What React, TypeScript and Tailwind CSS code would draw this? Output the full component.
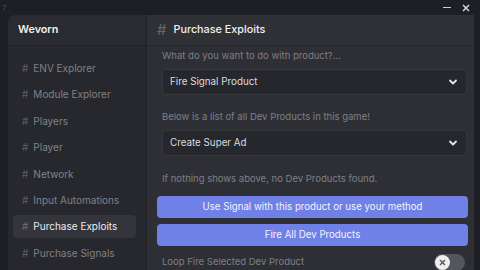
import React, { useState } from "react";

const items = [
  "ENV Explorer",
  "Module Explorer",
  "Players",
  "Player",
  "Network",
  "Input Automations",
  "Purchase Exploits",
  "Purchase Signals",
];

const Chevron = () => (
  <svg width="10" height="10" viewBox="0 0 10 10" fill="none">
    <path d="M2 3.5 L5 6.5 L8 3.5" stroke="#e5e5e5" strokeWidth="1.8" strokeLinecap="round" strokeLinejoin="round" />
  </svg>
);

const Select = ({ value }: { value: string }) => (
  <div className="h-[26px] rounded-[4px] bg-[#26272c] border border-[#36373d] flex items-center justify-between pl-[7px] pr-[8px] text-[9.8px] text-[#dcdcdf]">
    <span>{value}</span>
    <Chevron />
  </div>
);

export default function App() {
  const [active] = useState("Purchase Exploits");
  const [loop, setLoop] = useState(false);

  return (
    <div
      className="w-[480px] h-[270px] overflow-hidden bg-[#1e1f24] flex flex-col"
      style={{ fontFamily: "Inter, 'Open Sans', sans-serif" }}
    >
      <div className="h-[15px] shrink-0 flex items-center justify-between pl-[2px] pr-[10px]">
        <span className="text-[8px] text-[#45464b] leading-none">7</span>
        <div className="flex items-center gap-[11px]">
          <div className="w-[8px] h-[1.5px] bg-[#d0d0d0]" />
          <svg width="8" height="8" viewBox="0 0 8 8">
            <path d="M1 1 L7 7 M7 1 L1 7" stroke="#d8d8d8" strokeWidth="1.5" />
          </svg>
        </div>
      </div>
      <div className="flex flex-1 min-h-0 ml-[8px] mr-[6px] rounded-tl-[8px] overflow-hidden">
        <div className="w-[139px] shrink-0 bg-[#27282d] flex flex-col border-r border-[#222327]">
          <div className="h-[31px] shrink-0 flex items-center px-[10px] text-[10.8px] font-semibold text-[#f0f0f0] border-b border-[#222327] bg-[#2a2b30]">
            Wevorn
          </div>
          <div className="flex flex-col pt-[11px] pl-[5px] pr-[10px] gap-[3.4px]">
            {items.map((it) => (
              <div
                key={it}
                className={
                  it === active
                    ? "h-[23px] flex items-center px-[9px] rounded-[4px] bg-[#33353b] text-[#ececee] text-[10px]"
                    : "h-[23px] flex items-center px-[9px] text-[#808187] text-[10px]"
                }
              >
                <span className={it === active ? "mr-[5px] text-[#6e6f75]" : "mr-[5px] text-[#5d5e64]"}>#</span>
                {it}
              </div>
            ))}
          </div>
        </div>
        <div className="flex-1 flex flex-col bg-[#2e2f35]">
          <div className="h-[31px] shrink-0 flex items-center px-[10px] text-[10.8px] font-medium text-[#f0f0f0] bg-[#303137] border-b border-[#26272c]">
            <span className="text-[15px] font-normal text-[#66676d] mr-[7px]">#</span>
            Purchase Exploits
          </div>
          <div className="flex flex-col pl-[15px] pr-[7px] pt-[2px] text-[9.5px] text-[#7e7f85]">
            <div className="h-[17px] flex items-center">What do you want to do with product?...</div>
            <div className="mt-[4px]">
              <Select value="Fire Signal Product" />
            </div>
            <div className="h-[17px] flex items-center mt-[14px]">Below is a list of all Dev Products in this game!</div>
            <div className="mt-[4px]">
              <Select value="Create Super Ad" />
            </div>
            <div className="h-[17px] flex items-center mt-[15px]">If nothing shows above, no Dev Products found.</div>
          </div>
          <div className="flex flex-col gap-[6px] pl-[10px] pr-[6px] mt-[8px]">
            <button className="h-[22px] rounded-[4px] bg-[#6f80e6] text-[9.7px] text-[#f2f3ff]">
              Use Signal with this product or use your method
            </button>
            <button className="h-[22px] rounded-[4px] bg-[#6f80e6] text-[9.7px] text-[#f2f3ff]">
              Fire All Dev Products
            </button>
          </div>
          <div className="flex items-center justify-between pl-[15px] pr-[9px] mt-[8px] text-[9.5px] text-[#7e7f85]">
            <span>Loop Fire Selected Dev Product</span>
            <button
              onClick={() => setLoop(!loop)}
              className="w-[31px] h-[17px] rounded-full bg-[#55565b] flex items-center px-[1px]"
            >
              <span className="w-[15px] h-[15px] rounded-full bg-[#eeeeee] flex items-center justify-center">
                <svg width="7" height="7" viewBox="0 0 7 7">
                  <path d="M1 1 L6 6 M6 1 L1 6" stroke="#555" strokeWidth="1.4" />
                </svg>
              </span>
            </button>
          </div>
        </div>
      </div>
    </div>
  );
}
